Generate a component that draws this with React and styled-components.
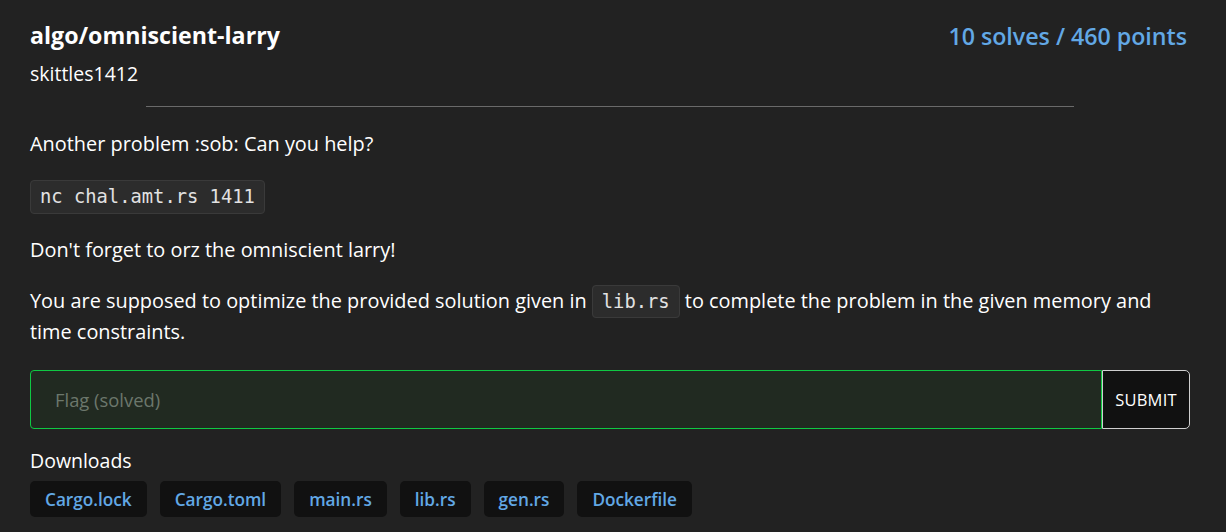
import React from 'react';
import styled, { createGlobalStyle } from 'styled-components';

const GlobalStyle = createGlobalStyle`
  html, body {
    margin: 0;
    background: #222222;
    color: #ffffff;
    font-family: "Open Sans", "Noto Sans", sans-serif;
  }
`;

const Page = styled.div`
  padding: 17px 36px 0 30px;
  width: 1160px;
`;

const Header = styled.header`
  display: flex;
  justify-content: space-between;
  align-items: flex-start;
`;

const Title = styled.h1`
  margin: 0;
  font-size: 23.2px;
  font-weight: 700;
  line-height: 36px;
`;

const Author = styled.div`
  font-size: 19.5px;
  line-height: 27px;
  margin-top: 7px;
`;

const Score = styled.div`
  font-size: 23.2px;
  font-weight: 600;
  color: #62a8e5;
  line-height: 38px;
  margin-right: 3px;
`;

const Rule = styled.hr`
  width: 80%;
  border: none;
  border-top: 1px solid #6a6a6a;
  margin: 19px auto 22px;
`;

const Para = styled.p`
  margin: 0 0 21px;
  font-size: 19.9px;
  line-height: 30px;
`;

const CodeBlock = styled.div`
  display: inline-block;
  font-family: "DejaVu Sans Mono", "Liberation Mono", monospace;
  font-size: 18.8px;
  line-height: 32px;
  padding: 0 9px;
  background: #2c2c2c;
  border: 1px solid #3a3a3a;
  border-radius: 4px;
  color: #e2e2e2;
  margin-bottom: 21px;
`;

const Code = styled.code`
  font-family: "DejaVu Sans Mono", "Liberation Mono", monospace;
  font-size: 18.8px;
  padding: 5px 9px;
  background: #2c2c2c;
  border: 1px solid #3a3a3a;
  border-radius: 4px;
  color: #e2e2e2;
`;

const FlagForm = styled.form`
  display: flex;
  margin-top: 23px;
  height: 59px;
`;

const FlagInput = styled.input`
  flex: 1;
  box-sizing: border-box;
  height: 100%;
  background: #212a21;
  border: 1px solid #0fc843;
  border-radius: 4px 0 0 4px;
  padding: 0 24px;
  font-family: inherit;
  font-size: 18.4px;
  color: #fff;
  outline: none;
  &::placeholder {
    color: #6c776c;
  }
`;

const SubmitButton = styled.button`
  width: 88px;
  height: 100%;
  background: #111111;
  border: 1px solid #cfcfcf;
  border-radius: 0 5px 5px 0;
  color: #fff;
  font-family: inherit;
  font-size: 16.5px;
  letter-spacing: 0.2px;
  padding: 0;
`;

const DownloadsLabel = styled.div`
  font-size: 19.5px;
  line-height: 26px;
  margin-top: 19px;
`;

const FileList = styled.div`
  display: flex;
  gap: 13px;
  margin-top: 7px;
`;

const FileButton = styled.a`
  display: inline-flex;
  align-items: center;
  height: 36px;
  padding: 0 15px;
  background: #111111;
  border-radius: 5px;
  color: #62a8e5;
  font-size: 17.2px;
  font-weight: 600;
  text-decoration: none;
`;

const files = ['Cargo.lock', 'Cargo.toml', 'main.rs', 'lib.rs', 'gen.rs', 'Dockerfile'];

const App = () => {
  return (
    <Page>
      <GlobalStyle />
      <Header>
        <div>
          <Title>algo/omniscient-larry</Title>
          <Author>skittles1412</Author>
        </div>
        <Score>10 solves / 460 points</Score>
      </Header>
      <Rule />
      <Para>Another problem :sob: Can you help?</Para>
      <CodeBlock>nc chal.amt.rs 1411</CodeBlock>
      <Para>Don't forget to orz the omniscient larry!</Para>
      <Para>
        You are supposed to optimize the provided solution given in <Code>lib.rs</Code> to complete
        the problem in the given memory and time constraints.
      </Para>
      <FlagForm onSubmit={(e) => e.preventDefault()}>
        <FlagInput placeholder="Flag (solved)" />
        <SubmitButton type="submit">SUBMIT</SubmitButton>
      </FlagForm>
      <DownloadsLabel>Downloads</DownloadsLabel>
      <FileList>
        {files.map((f) => (
          <FileButton key={f} href="#">
            {f}
          </FileButton>
        ))}
      </FileList>
    </Page>
  );
};

export default App;
